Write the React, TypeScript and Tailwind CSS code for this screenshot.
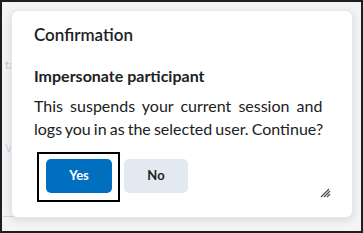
export default function App() {
  return (
    <div className="relative w-[363px] h-[233px] border-2 border-[#1e1e1e] bg-[#f4f4f6] pl-[9px] pt-[8px] overflow-hidden" style={{ fontFamily: "Lato, 'Noto Sans', sans-serif" }}>
      {/* page content peeking out behind the dialog */}
      <span className="absolute left-[3px] top-[55px] text-[11px] text-[#c4c7cc]">ta</span>
      <span className="absolute left-[3px] top-[138px] text-[11px] text-[#c9d3e0]">V</span>
      <div className="absolute left-[1px] top-[214px] w-[10px] h-px bg-[#d4d6da]" />

      <div className="relative w-[342px] h-[208px] bg-white rounded-[7px] shadow-[0_2px_8px_rgba(0,0,0,0.12)] border border-[#e6e7ea] pl-[22px] pt-[12px] text-[#202122]">
        <h1 className="text-[17px] font-semibold leading-[24px]">Confirmation</h1>
        <h2 className="mt-[17px] text-[16px] font-bold leading-[24px]">Impersonate participant</h2>
        <p className="mt-[6px] text-[16px] leading-[23px] whitespace-nowrap">
          <span className="[word-spacing:3px]">This suspends your current session and</span>
          <br />
          <span className="[word-spacing:-1px]">logs you in as the selected user. Continue?</span>
        </p>
        <div className="mt-[19px] ml-[12px] flex items-center gap-[12px]">
          <button className="relative w-[66px] h-[34px] rounded-[5px] bg-[#006fbf] text-white text-[13px] font-bold">
            Yes
            <span className="absolute -left-[9px] -right-[8px] -top-[7px] -bottom-[9px] border-2 border-black" />
          </button>
          <button className="w-[64px] h-[34px] rounded-[5px] bg-[#e3e9f1] text-[13px] font-bold">No</button>
        </div>
        <svg className="absolute right-[21px] bottom-[19px]" width="11" height="10" viewBox="0 0 11 10">
          <path d="M1 9 L9 1 M4 9 L10 3 M7 9 L10 6" stroke="#494c50" strokeWidth="1.2" fill="none" />
        </svg>
      </div>
    </div>
  );
}
